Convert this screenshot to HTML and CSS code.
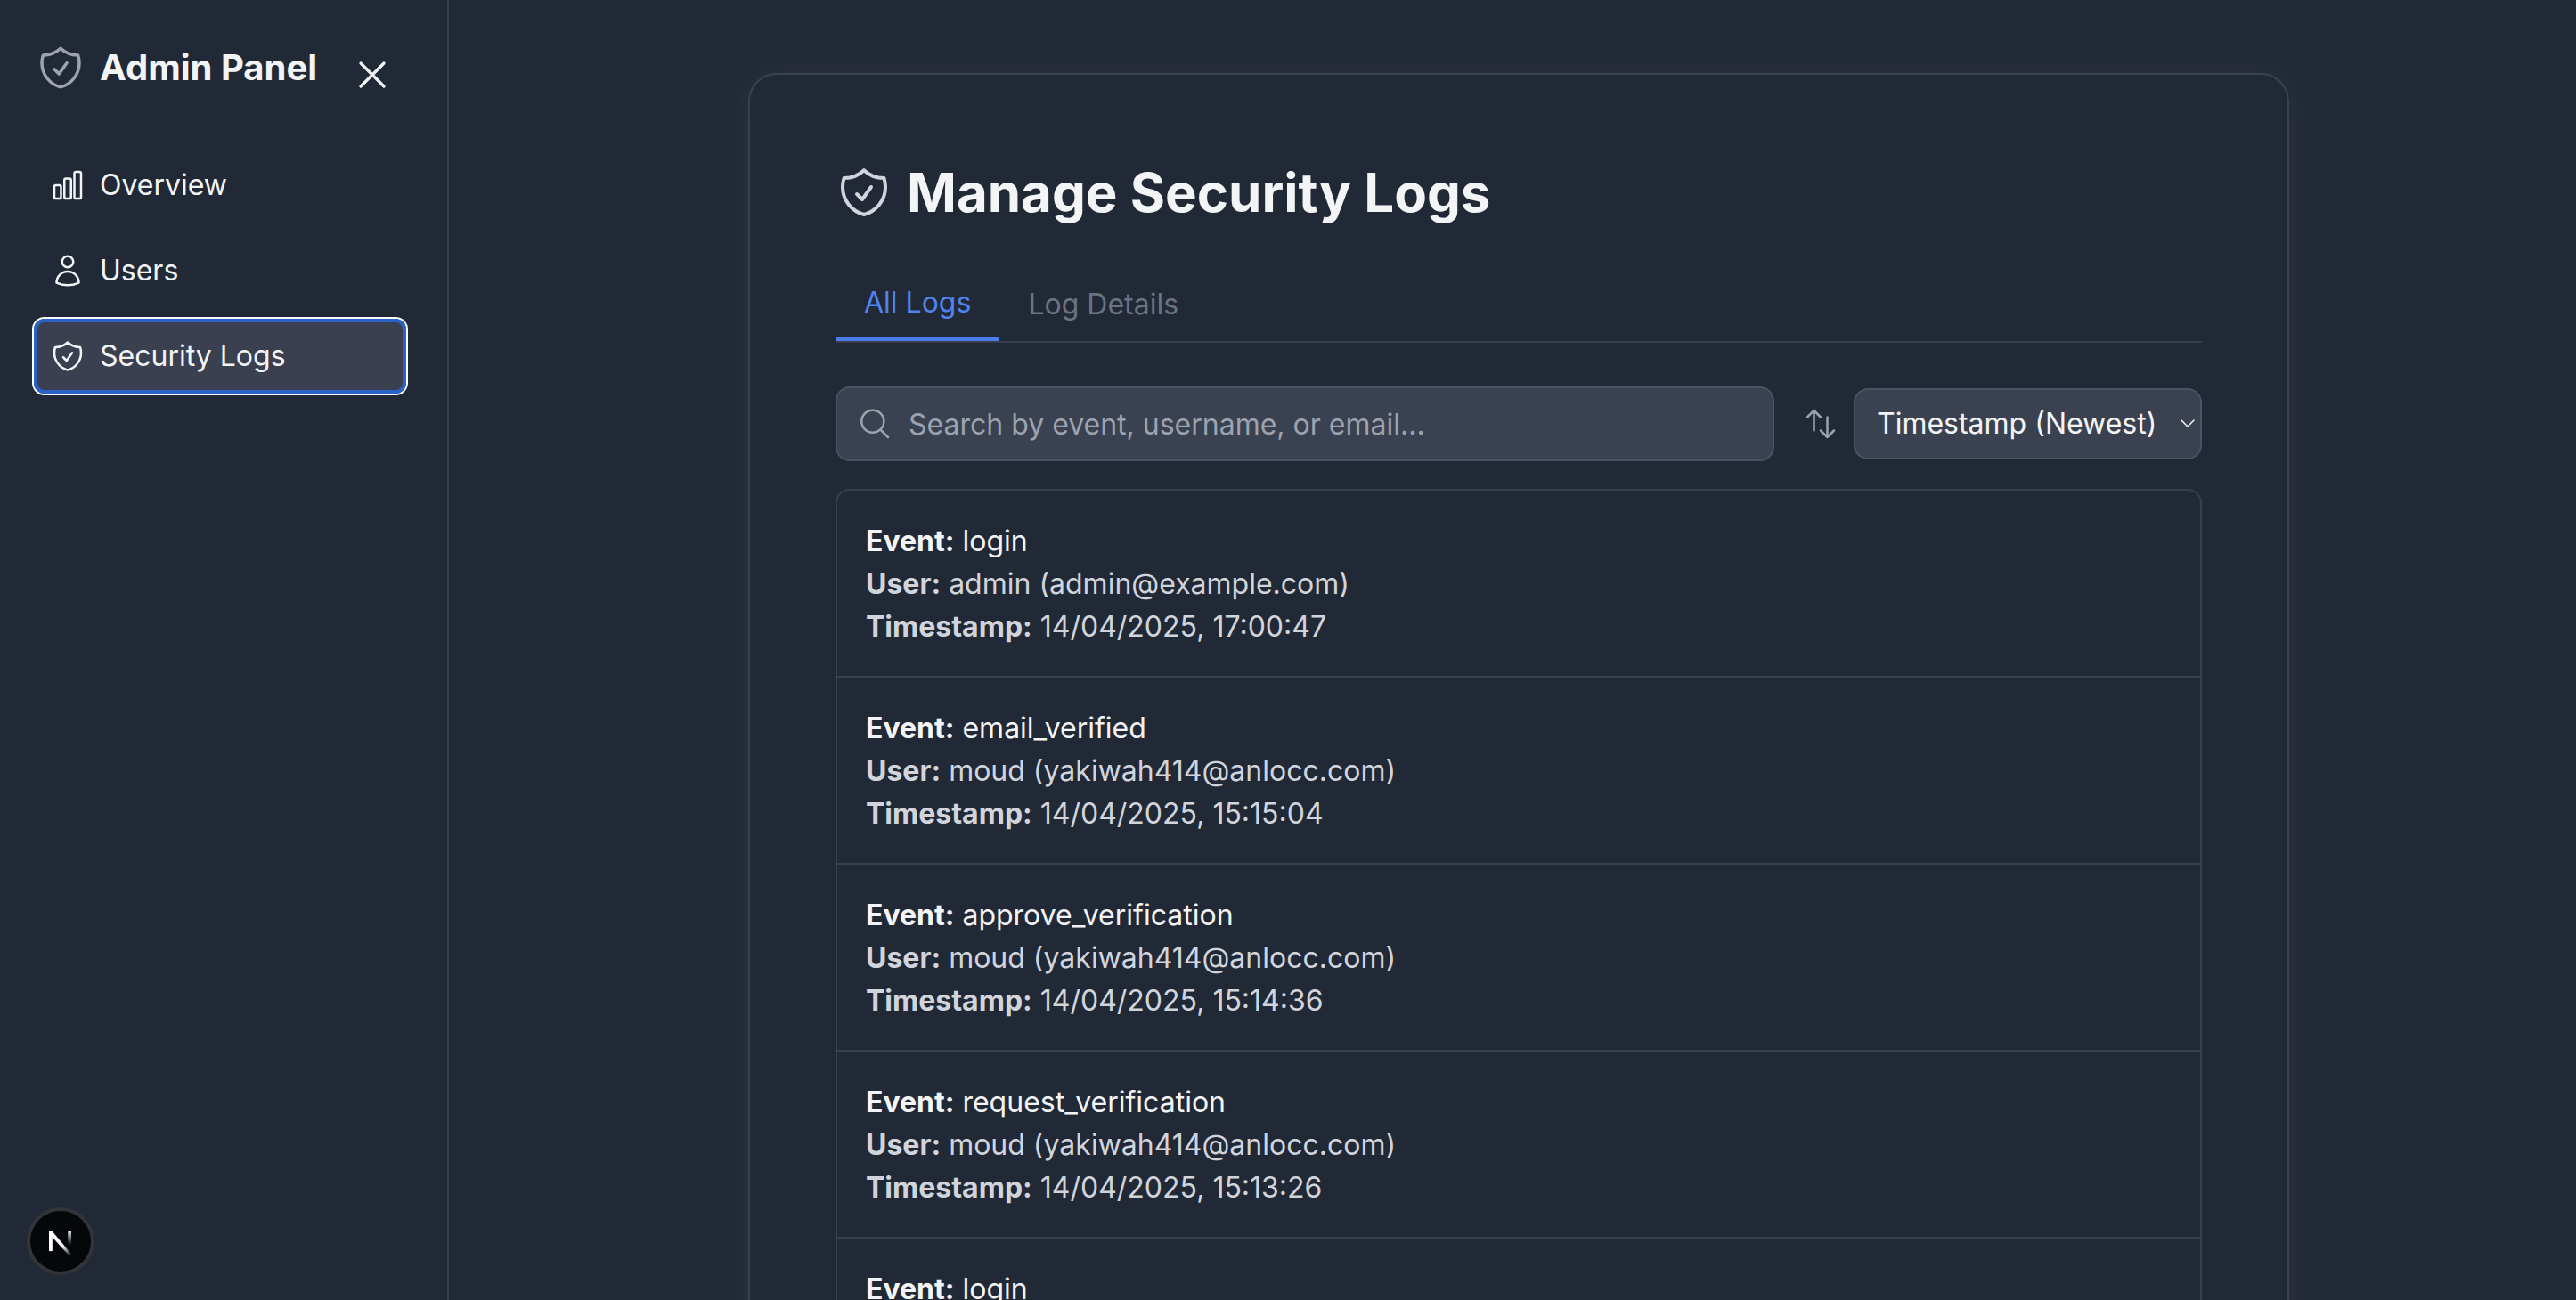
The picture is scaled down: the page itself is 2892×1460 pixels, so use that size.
FILE: index.html
```html
<!DOCTYPE html>
<html lang="en">
<head>
  <meta charset="UTF-8">
  <title>Manage Security Logs</title>
  <link rel="stylesheet" href="styles.css">
</head>
<body>
  <div class="app">
    <aside class="sidebar">
      <div class="brand">
        <svg class="brand-icon" viewBox="0 0 24 24"><path d="M9 12.750 11.250 15 15 9.750m-3-7.040A11.960 11.960 0 0 1 3.600 6 12 12 0 0 0 3 9.750c0 5.590 3.820 10.290 9 11.620 5.180-1.330 9-6.030 9-11.620 0-1.310-.21-2.570-.6-3.750h-.15c-3.200 0-6.100-1.250-8.250-3.290Z"/></svg>
        <span class="brand-name">Admin Panel</span>
        <svg class="close-icon" viewBox="0 0 24 24"><path d="M6 18 18 6M6 6l12 12"/></svg>
      </div>
      <nav class="nav">
        <a class="nav-item">
          <svg class="nav-icon" viewBox="0 0 24 24"><path d="M3 13.100c0-.6.5-1.100 1.100-1.100h2.300c.6 0 1.100.5 1.100 1.100v6.800c0 .6-.5 1.100-1.100 1.100H4.100C3.500 21 3 20.500 3 19.900v-6.800ZM9.750 8.600c0-.6.5-1.100 1.100-1.100h2.300c.6 0 1.100.5 1.100 1.100v11.300c0 .6-.5 1.100-1.100 1.100h-2.300c-.6 0-1.100-.5-1.100-1.100V8.600ZM16.500 4.100c0-.6.5-1.100 1.100-1.100h2.300c.6 0 1.100.5 1.100 1.100v15.800c0 .6-.5 1.100-1.100 1.100h-2.300c-.6 0-1.100-.5-1.100-1.100V4.100Z"/></svg>
          Overview
        </a>
        <a class="nav-item">
          <svg class="nav-icon" viewBox="0 0 24 24"><path d="M15.750 6a3.750 3.750 0 1 1-7.500 0 3.750 3.750 0 0 1 7.500 0ZM4.500 20.120a7.500 7.500 0 0 1 15 0A17.930 17.930 0 0 1 12 21.750c-2.680 0-5.210-.58-7.500-1.630Z"/></svg>
          Users
        </a>
        <a class="nav-item nav-item-active">
          <svg class="nav-icon" viewBox="0 0 24 24"><path d="M9 12.750 11.250 15 15 9.750m-3-7.040A11.960 11.960 0 0 1 3.600 6 12 12 0 0 0 3 9.750c0 5.590 3.820 10.290 9 11.620 5.180-1.330 9-6.030 9-11.620 0-1.310-.21-2.570-.6-3.750h-.15c-3.200 0-6.100-1.250-8.250-3.290Z"/></svg>
          Security Logs
        </a>
      </nav>
      <div class="dev-badge">
        <svg viewBox="0 0 24 24" class="dev-logo">
          <defs>
            <linearGradient id="fadeA" gradientUnits="userSpaceOnUse" x1="4" y1="5" x2="20" y2="22"><stop offset="0.6" stop-color="#fff"/><stop offset="1" stop-color="#fff" stop-opacity="0"/></linearGradient>
            <linearGradient id="fadeB" x1="0" y1="0" x2="0" y2="1"><stop offset="0" stop-color="#fff" stop-opacity="0.9"/><stop offset="1" stop-color="#fff" stop-opacity="0"/></linearGradient>
          </defs>
          <path d="M3.800 5h2.400v14H3.800z" fill="#fff"/>
          <path d="M3.800 5h2.400L19.600 21l-1.700 1.100L3.800 6.500z" fill="url(#fadeA)"/>
          <path d="M17.200 5h2.400v9.500h-2.400z" fill="url(#fadeB)"/>
        </svg>
      </div>
    </aside>
    <main class="main">
      <section class="card">
        <h1 class="page-title">
          <svg class="title-icon" viewBox="0 0 24 24"><path d="M9 12.750 11.250 15 15 9.750m-3-7.040A11.960 11.960 0 0 1 3.600 6 12 12 0 0 0 3 9.750c0 5.590 3.820 10.290 9 11.620 5.180-1.330 9-6.030 9-11.620 0-1.310-.21-2.570-.6-3.750h-.15c-3.200 0-6.100-1.250-8.250-3.290Z"/></svg>
          Manage Security Logs
        </h1>
        <div class="tabs">
          <button class="tab tab-active">All Logs</button>
          <button class="tab">Log Details</button>
        </div>
        <div class="toolbar">
          <div class="search">
            <svg class="search-icon" viewBox="0 0 24 24"><path d="m21 21-5.200-5.200m0 0A7.500 7.500 0 1 0 5.200 5.200a7.500 7.500 0 0 0 10.600 10.600Z"/></svg>
            <input class="search-input" type="text" placeholder="Search by event, username, or email...">
          </div>
          <svg class="sort-icon" viewBox="0 0 24 24"><path d="M3 7.500 7.500 3m0 0L12 7.500M7.500 3v13.500m13.500 0L16.500 21m0 0L12 16.500m4.500 4.500V7.500"/></svg>
          <div class="sort">
            <select class="sort-select">
              <option>Timestamp (Newest)</option>
              <option>Timestamp (Oldest)</option>
            </select>
            <svg class="sort-chevron" viewBox="0 0 16 9"><path d="M1 1l7 7 7-7"/></svg>
          </div>
        </div>
        <ul class="log-list">
          <li class="log-row">
            <p class="log-event"><b>Event:</b> login</p>
            <p><b>User:</b> admin (admin@example.com)</p>
            <p><b>Timestamp:</b> 14/04/2025, 17:00:47</p>
          </li>
          <li class="log-row">
            <p class="log-event"><b>Event:</b> email_verified</p>
            <p><b>User:</b> moud (yakiwah414@anlocc.com)</p>
            <p><b>Timestamp:</b> 14/04/2025, 15:15:04</p>
          </li>
          <li class="log-row">
            <p class="log-event"><b>Event:</b> approve_verification</p>
            <p><b>User:</b> moud (yakiwah414@anlocc.com)</p>
            <p><b>Timestamp:</b> 14/04/2025, 15:14:36</p>
          </li>
          <li class="log-row">
            <p class="log-event"><b>Event:</b> request_verification</p>
            <p><b>User:</b> moud (yakiwah414@anlocc.com)</p>
            <p><b>Timestamp:</b> 14/04/2025, 15:13:26</p>
          </li>
          <li class="log-row">
            <p class="log-event"><b>Event:</b> login</p>
          </li>
        </ul>
      </section>
    </main>
  </div>
</body>
</html>
```

FILE: styles.css
```css
* {
  box-sizing: border-box;
}
html, body {
  margin: 0;
  height: 100%;
  overflow: hidden;
}
body {
  background-color: #222936;
  color: #f3f4f6;
  font-family: Inter, "Noto Sans", sans-serif;
  font-size: 32px;
  line-height: 48px;
}
svg {
  fill: none;
  stroke: currentColor;
  stroke-linecap: round;
  stroke-linejoin: round;
  flex-shrink: 0;
}
.app {
  display: flex;
  height: 1460px;
}

/* sidebar */
.sidebar {
  width: 504px;
  flex-shrink: 0;
  border-right: 2px solid #383f4e;
  padding: 54px 38px 28px 38px;
  display: flex;
  flex-direction: column;
}
.brand {
  display: flex;
  align-items: flex-start;
  margin-bottom: 56px;
}
.brand-icon {
  width: 56px;
  height: 56px;
  margin: -6px 16px 0 2px;
  color: #9ca3af;
  stroke-width: 1.5;
}
.brand-name {
  font-size: 40px;
  line-height: 44px;
  font-weight: 700;
}
.close-icon {
  width: 52px;
  height: 52px;
  margin: 4px 0 0 36px;
  stroke-width: 1.5;
}
.nav {
  display: flex;
  flex-direction: column;
  gap: 12px;
}
.nav-item {
  display: flex;
  align-items: center;
  height: 84px;
  width: 418px;
  padding-left: 18px;
  gap: 16px;
  border-radius: 12px;
  color: #f3f4f6;
}
.nav-icon {
  width: 40px;
  height: 40px;
  stroke-width: 1.5;
}
.nav-item-active {
  background-color: #3a4050;
  box-shadow: 0 0 0 2px #fff, inset 0 0 0 4px #2a62c8;
}
.dev-badge {
  margin-top: auto;
  width: 76px;
  height: 76px;
  margin-left: -8px;
  border-radius: 50%;
  background-color: #05070a;
  border: 4px solid #333438;
  display: flex;
  align-items: center;
  justify-content: center;
}
.dev-logo {
  width: 38px;
  height: 38px;
  stroke: none;
}

/* main area */
.main {
  flex: 1;
  padding: 82px 322px 0 336px;
  overflow: hidden;
}
.card {
  border: 2px solid #3a4150;
  border-radius: 32px;
  padding: 96px 96px 0 96px;
  height: 1600px;
  box-shadow: 0 0 40px rgba(255, 255, 255, 0.05);
}
.page-title {
  margin: 0 0 31px 0;
  display: flex;
  align-items: center;
  gap: 16px;
  font-size: 60px;
  line-height: 72px;
  font-weight: 700;
}
.title-icon {
  width: 64px;
  height: 64px;
  color: #d1d5db;
  stroke-width: 1.5;
}
.tabs {
  display: flex;
  border-bottom: 2px solid #383f4e;
}
.tab {
  background: none;
  border: none;
  border-bottom: 4px solid transparent;
  padding: 35px 32px 13px 32px;
  font: inherit;
  color: #6b7280;
}
.tab-active {
  color: #4f83ee;
  padding-top: 33px;
  padding-bottom: 15px;
  border-bottom-color: #4a7de8;
}
.toolbar {
  display: flex;
  align-items: center;
  margin-top: 49px;
}
.search {
  position: relative;
  width: 1054px;
}
.search-icon {
  position: absolute;
  left: 24px;
  top: 22px;
  width: 40px;
  height: 40px;
  color: #9ca3af;
  stroke-width: 1.5;
}
.search-input {
  display: block;
  width: 100%;
  height: 84px;
  padding: 0 24px 0 80px;
  background-color: #3a4150;
  border: 2px solid #4b5261;
  border-radius: 16px;
  color: #f3f4f6;
  font: inherit;
}
.search-input::placeholder {
  color: #9ca3af;
  opacity: 1;
}
.sort-icon {
  width: 40px;
  height: 40px;
  margin: 0 17px 0 32px;
  color: #9ca3af;
  stroke-width: 1.5;
}
.sort {
  position: relative;
  flex: 1;
}
.sort-select {
  display: block;
  width: 100%;
  height: 80px;
  padding: 0 0 0 24px;
  appearance: none;
  background-color: #3a4150;
  border: 2px solid #4b5261;
  border-radius: 16px;
  color: #f3f4f6;
  font: inherit;
}
.sort-chevron {
  position: absolute;
  right: 8px;
  top: 35px;
  width: 16px;
  height: 9px;
  stroke-width: 1.5;
}
.log-list {
  list-style: none;
  margin: 31px 0 0 0;
  padding: 0;
  border: 2px solid #383f4e;
  border-radius: 16px;
}
.log-row {
  padding: 33px 32px 31px 32px;
  border-bottom: 2px solid #383f4e;
  color: #d1d5db;
}
.log-row p {
  margin: 0;
}
.log-row b {
  font-weight: 700;
}
.log-event {
  color: #f3f4f6;
}
```
